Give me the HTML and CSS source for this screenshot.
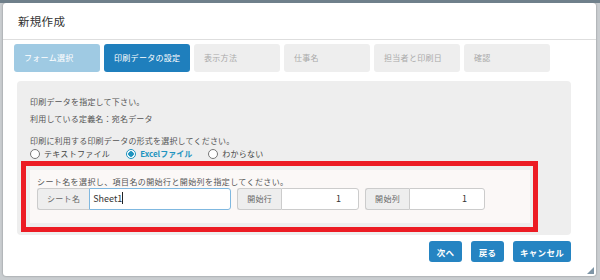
FILE: index.html
```html
<!DOCTYPE html>
<html lang="ja">
<head>
  <meta charset="UTF-8" />
  <title>新規作成</title>
  <link rel="stylesheet" href="styles.css">
</head>
<body>
  <div class="dialog">
    <div class="dialog-head">新規作成</div>

    <div class="steps">
      <div class="step done">フォーム選択</div>
      <div class="step active">印刷データの設定</div>
      <div class="step">表示方法</div>
      <div class="step">仕事名</div>
      <div class="step">担当者と印刷日</div>
      <div class="step">確認</div>
    </div>

    <div class="panel">
      <div class="notes">
        <p class="line">印刷データを指定して下さい。</p>
        <p class="line">利用している定義名：宛名データ</p>
        <p class="line gap">印刷に利用する印刷データの形式を選択してください。</p>
        <div class="radios">
          <label class="radio"><span class="dot"></span>テキストファイル</label>
          <label class="radio checked"><span class="dot"></span>Excelファイル</label>
          <label class="radio"><span class="dot"></span>わからない</label>
        </div>
      </div>

      <div class="highlight">
        <div class="sheet-box">
          <p class="hint">シート名を選択し、項目名の開始行と開始列を指定してください。</p>
          <div class="fields">
            <div class="group">
              <span class="addon">シート名</span>
              <span class="input focus sheet">Sheet1<i class="caret"></i></span>
            </div>
            <div class="group">
              <span class="addon">開始行</span>
              <span class="input num">1</span>
            </div>
            <div class="group">
              <span class="addon">開始列</span>
              <span class="input num col">1</span>
            </div>
          </div>
        </div>
      </div>
    </div>

    <div class="actions">
      <button class="btn">次へ</button>
      <button class="btn">戻る</button>
      <button class="btn wide">キャンセル</button>
    </div>

    <svg class="grip" width="7" height="7" viewBox="0 0 7 7">
      <path d="M7 0 L7 7 L0 7 Z" fill="#7e95a6" />
    </svg>
  </div>
</body>
</html>
```

FILE: styles.css
```css
* {
  margin: 0;
  padding: 0;
  box-sizing: border-box;
  font-family: 'Noto Sans CJK JP', 'Noto Sans', sans-serif;
}
body {
  background: #c9cdd0;
  width: 600px;
  height: 280px;
  overflow: hidden;
  border-top: 3px solid #6f808b;
}
.dialog {
  position: relative;
  margin-left: 3px;
  width: 593px;
  height: 273px;
  background: white;
  border-radius: 3px;
  box-shadow: 0 0 2px rgba(0, 0, 0, 0.4);
}
.dialog-head {
  height: 37px;
  padding: 10px 0 0 15px;
  font-size: 11.5px;
  letter-spacing: 0.3px;
  color: #333;
  border-bottom: 1px solid #dedede;
}
.steps {
  display: flex;
  gap: 4px;
  padding: 4px 0 0 11px;
}
.step {
  width: 86px;
  height: 28px;
  line-height: 28px;
  padding-left: 10px;
  font-size: 8px;
  letter-spacing: 0.3px;
  color: #aaa;
  background: #eeeeee;
  border-radius: 3px;
}
.step.done {
  background: #9fcae3;
  color: white;
}
.step.active {
  background: #1f7fbd;
  color: white;
}
.panel {
  margin: 9px 0 0 14px;
  width: 554px;
  height: 154px;
  background: #eeeeee;
  border-radius: 4px;
  padding: 12px 4px 0;
}
.notes {
  padding-left: 9px;
}
.line {
  font-size: 8px;
  letter-spacing: 0.2px;
  color: #555;
  line-height: 17px;
}
.line.gap {
  margin-top: 7px;
  line-height: 13px;
}
.radios {
  display: flex;
  gap: 16px;
  font-size: 8px;
  letter-spacing: 0.3px;
  color: #444;
  line-height: 13px;
}
.radio {
  display: flex;
  align-items: center;
  gap: 4px;
}
.dot {
  width: 10px;
  height: 10px;
  border: 1px solid #777;
  border-radius: 50%;
  background: white;
}
.radio.checked {
  color: #1f94bf;
  font-weight: bold;
  letter-spacing: 0;
}
.radio.checked .dot {
  border-color: #1f94bf;
  background: radial-gradient(circle, #1f94bf 0 2.5px, white 3px);
}
.highlight {
  margin-top: 1px;
  width: 517px;
  height: 71px;
  border: 5px solid #ec1c24;
  padding: 4px 3px 4px 4px;
}
.sheet-box {
  background: #fbf8f7;
  height: 53px;
  padding: 6px 0 0 7px;
}
.hint {
  font-size: 8px;
  letter-spacing: 0.4px;
  color: #555;
  line-height: 12px;
}
.fields {
  display: flex;
  gap: 6px;
}
.group {
  display: flex;
  height: 22px;
}
.addon {
  display: block;
  padding: 0 9px;
  line-height: 20px;
  font-size: 8px;
  letter-spacing: 0.3px;
  color: #666;
  background: #eeeeee;
  border: 1px solid #ccc;
  border-right: none;
  border-radius: 3px 0 0 3px;
}
.input {
  display: block;
  background: white;
  border: 1px solid #ccc;
  border-radius: 0 3px 3px 0;
  font-size: 9px;
  color: #333;
  line-height: 20px;
}
.input.focus {
  border-color: #7fb8e0;
}
.input.sheet {
  width: 142px;
  padding-left: 3px;
}
.caret {
  display: inline-block;
  width: 1px;
  height: 12px;
  background: #222;
  vertical-align: -2px;
}
.input.num {
  width: 78px;
  text-align: right;
  padding-right: 17px;
}
.input.num.col {
  width: 76px;
}
.actions {
  display: flex;
  justify-content: flex-end;
  gap: 9px;
  padding: 6px 25px 0 0;
}
.btn {
  height: 21px;
  width: 33px;
  border: none;
  border-radius: 3px;
  background: #2584c2;
  color: white;
  font-size: 8.5px;
  font-weight: bold;
  letter-spacing: 0.3px;
}
.btn.wide {
  width: 58px;
}
.grip {
  position: absolute;
  right: 2px;
  bottom: 2px;
}
```
